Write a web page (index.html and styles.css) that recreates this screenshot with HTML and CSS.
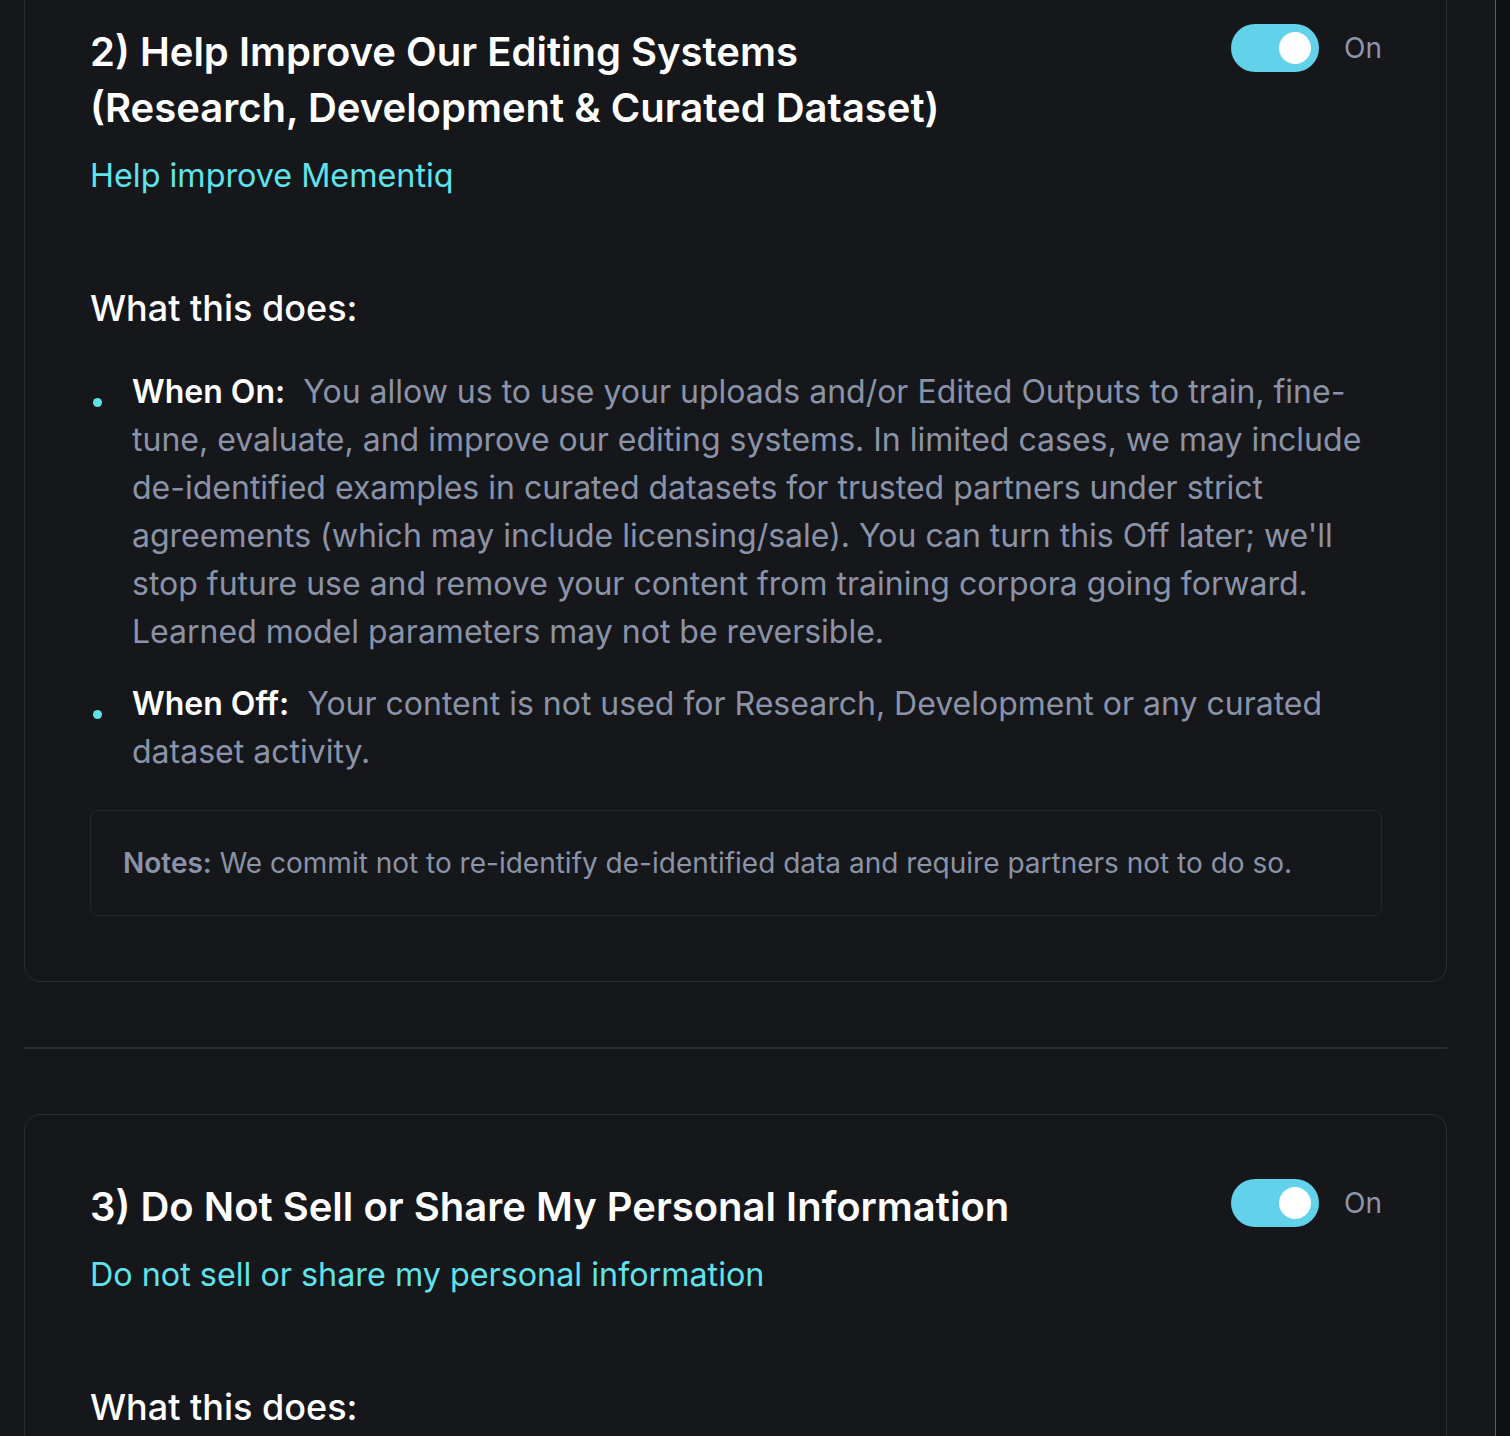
FILE: index.html
```html
<!DOCTYPE html>
<html>
<head>
<meta charset="utf-8">
<link rel="stylesheet" href="styles.css">
</head>
<body>
<div class="frame">
  <main class="page">
    <section class="card card-first">
      <div class="card-head">
        <div class="head-text">
          <h2 class="title">2) Help Improve Our Editing Systems<br>(Research, Development &amp; Curated Dataset)</h2>
          <div class="sublink">Help improve Mementiq</div>
        </div>
        <div class="switch-wrap">
          <span class="switch"><span class="knob"></span></span>
          <span class="switch-label">On</span>
        </div>
      </div>
      <h3 class="what">What this does:</h3>
      <ul class="bullets">
        <li><span class="lbl">When On:</span> <span class="desc">You allow us to use your uploads and/or Edited Outputs to train, fine-tune, evaluate, and improve our editing systems. In limited cases, we may include de-identified examples in curated datasets for trusted partners under strict agreements (which may include licensing/sale). You can turn this Off later; we'll stop future use and remove your content from training corpora going forward. Learned model parameters may not be reversible.</span></li>
        <li><span class="lbl">When Off:</span> <span class="desc">Your content is not used for Research, Development or any curated dataset activity.</span></li>
      </ul>
      <div class="notes"><b>Notes:</b> We commit not to re-identify de-identified data and require partners not to do so.</div>
    </section>
    <hr class="divider">
    <section class="card">
      <div class="card-head">
        <div class="head-text">
          <h2 class="title">3) Do Not Sell or Share My Personal Information</h2>
          <div class="sublink">Do not sell or share my personal information</div>
        </div>
        <div class="switch-wrap">
          <span class="switch"><span class="knob"></span></span>
          <span class="switch-label">On</span>
        </div>
      </div>
      <h3 class="what">What this does:</h3>
    </section>
  </main>
  <div class="scroll-track"></div>
</div>
</body>
</html>
```

FILE: styles.css
```css
html, body {
  margin: 0;
  padding: 0;
  background: #16171b;
  height: 100%;
  overflow: hidden;
}
body {
  font-family: Inter, "Noto Sans", sans-serif;
  color: #ffffff;
}
.frame {
  display: flex;
  height: 1436px;
}
.page {
  flex: 1;
  border-right: 1px solid #5a5d64;
  padding: 0 48px 0 24px;
  overflow: hidden;
}
.scroll-track {
  width: 14px;
  background: #101114;
}
.card {
  border: 1.5px solid #2a2d35;
  border-radius: 16px;
  padding: 64px 64px 65px 65px;
}
.card-first {
  margin-top: -41px;
}
.card-head {
  display: flex;
  justify-content: space-between;
  align-items: flex-start;
}
.title {
  margin: 0;
  font-size: 40px;
  line-height: 56px;
  font-weight: 600;
  color: #ffffff;
}
.sublink {
  margin-top: 16px;
  font-size: 32.3px;
  line-height: 48px;
  color: #60e3ea;
  font-weight: 400;
}
.switch-wrap {
  display: flex;
  align-items: center;
  gap: 25px;
  flex-shrink: 0;
}
.switch {
  width: 88px;
  height: 48px;
  border-radius: 24px;
  background: #62d1ea;
  display: flex;
  align-items: center;
  justify-content: flex-end;
  padding: 0 8px;
  box-sizing: border-box;
}
.knob {
  width: 32px;
  height: 32px;
  border-radius: 50%;
  background: #ffffff;
}
.switch-label {
  font-size: 28px;
  color: #8e96a8;
  line-height: 48px;
}
.what {
  margin: 80px 0 0;
  font-size: 36px;
  line-height: 56px;
  font-weight: 500;
  color: #ffffff;
}
.bullets {
  list-style: none;
  margin: 32px 0 0;
  padding: 0 0 0 42px;
}
.bullets li {
  position: relative;
  font-size: 32px;
  line-height: 48px;
  color: #8a93a7;
  margin-bottom: 24px;
}
.bullets li:last-child {
  margin-bottom: 0;
}
.bullets li::before {
  content: "";
  position: absolute;
  left: -39px;
  top: 30px;
  width: 9px;
  height: 9px;
  border-radius: 50%;
  background: #5fe1e6;
}
.lbl {
  color: #ffffff;
  font-weight: 600;
  margin-right: 9px;
}
.notes {
  margin-top: 34px;
  border: 1.5px solid #23272e;
  border-radius: 8px;
  padding: 32px 32px;
  font-size: 28px;
  line-height: 40px;
  color: #8a93a7;
}
.notes b {
  font-weight: 600;
}
.divider {
  border: 0;
  border-top: 2px solid #262c37;
  margin: 65px 0 65px;
}
```
